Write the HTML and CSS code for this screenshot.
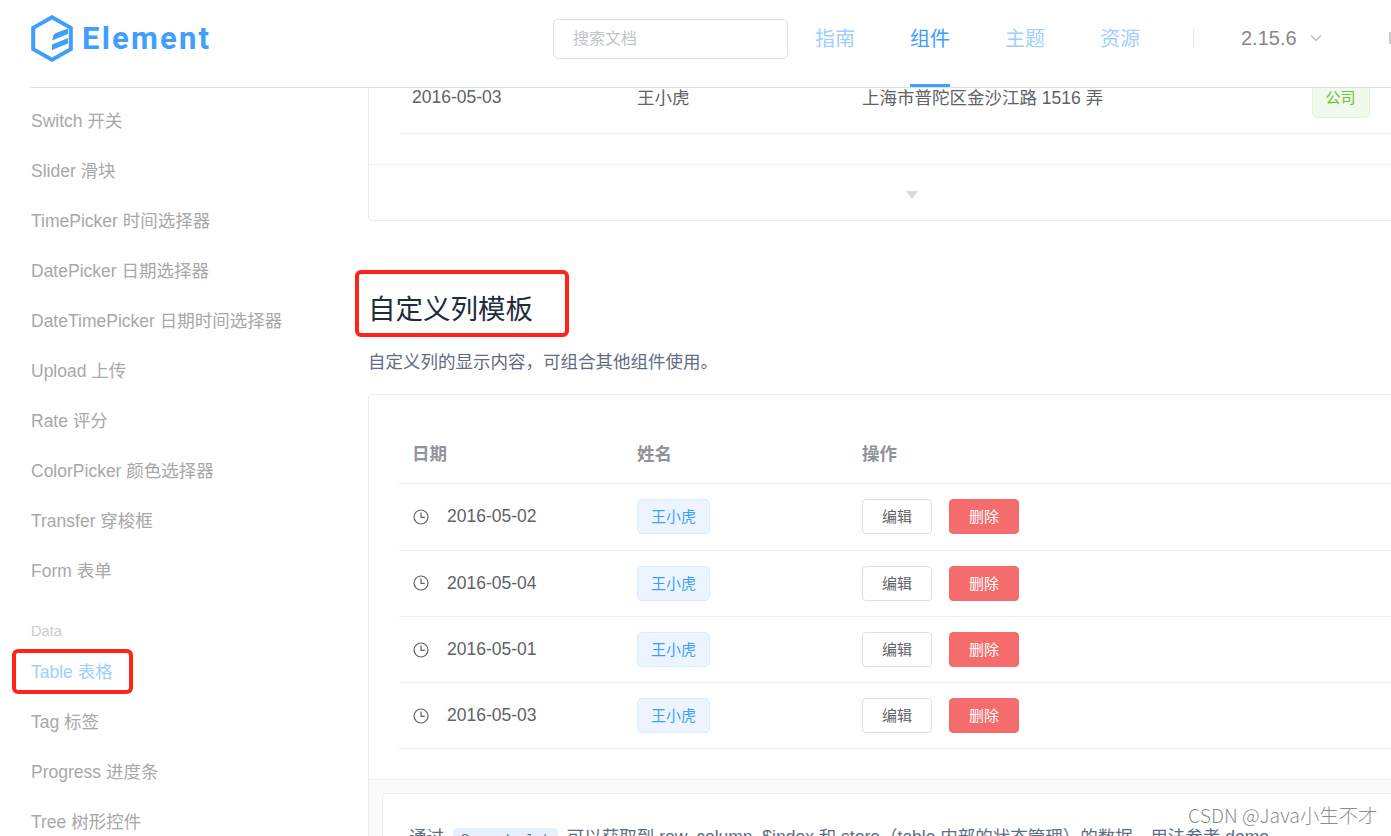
FILE: index.html
```html
<!DOCTYPE html>
<html lang="zh-CN">
<head>
  <meta charset="UTF-8" />
  <title>Element</title>
  <link rel="stylesheet" href="styles.css">
</head>
<body>

  <header class="topbar">
    <a class="logo">
      <svg class="logo-mark" viewBox="0 0 42 47" width="42" height="47">
        <path d="M21 2.2 L39.8 12.8 V34.2 L21 44.8 L2.2 34.2 V12.8 Z" fill="none" stroke="#409eff" stroke-width="4"/>
        <path d="M22 22.5 C22 20 23 19 25 18 L37 13.5 V19 L27 23 L21 25.5 Z" fill="#409eff"/>
        <path d="M21 29.5 L37 23 V28.5 L21 35 Z" fill="#409eff"/>
      </svg>
      <span class="logo-text">Element</span>
    </a>
    <div class="search">搜索文档</div>
    <nav class="nav">
      <a>指南</a>
      <a class="active">组件</a>
      <a>主题</a>
      <a>资源</a>
    </nav>
    <span class="divider"></span>
    <div class="version">2.15.6
      <svg viewBox="0 0 12 8" width="12" height="8"><path d="M1 1.5 L6 6.5 L11 1.5" fill="none" stroke="#b4b4b4" stroke-width="1.2"/></svg>
    </div>
    <span class="lang"></span>
  </header>

  <div class="page">
    <aside class="sidebar">
      <ul class="menu">
        <li>Switch 开关</li>
        <li>Slider 滑块</li>
        <li>TimePicker 时间选择器</li>
        <li>DatePicker 日期选择器</li>
        <li>DateTimePicker 日期时间选择器</li>
        <li>Upload 上传</li>
        <li>Rate 评分</li>
        <li>ColorPicker 颜色选择器</li>
        <li>Transfer 穿梭框</li>
        <li>Form 表单</li>
      </ul>
      <div class="menu-group">Data</div>
      <ul class="menu">
        <li class="current">Table 表格</li>
        <li>Tag 标签</li>
        <li>Progress 进度条</li>
        <li>Tree 树形控件</li>
      </ul>
    </aside>

    <main class="content">
      <section class="demo demo-top">
        <div class="row row-top">
          <span class="cell col-date">2016-05-03</span>
          <span class="cell col-name">王小虎</span>
          <span class="cell col-addr">上海市普陀区金沙江路 1516 弄</span>
          <span class="tag tag-green">公司</span>
        </div>
        <div class="demo-control"><span class="caret"></span></div>
      </section>

      <h3 class="title">自定义列模板</h3>
      <p class="desc">自定义列的显示内容&#xFF0C;可组合其他组件使用。</p>

      <section class="demo">
        <div class="table">
          <div class="row head">
            <span class="cell col-date">日期</span>
            <span class="cell col-name">姓名</span>
            <span class="cell">操作</span>
          </div>
          <div class="row">
            <span class="cell col-date"><svg class="clock" viewBox="0 0 16 16" width="16" height="16"><circle cx="8" cy="8" r="7" fill="none" stroke="#606266" stroke-width="1.2"/><path d="M8 3.6 V8.4 H11.8" fill="none" stroke="#606266" stroke-width="1.2"/></svg>2016-05-02</span>
            <span class="cell col-name"><span class="tag">王小虎</span></span>
            <span class="cell actions"><a class="btn">编辑</a><a class="btn btn-danger">删除</a></span>
          </div>
          <div class="row">
            <span class="cell col-date"><svg class="clock" viewBox="0 0 16 16" width="16" height="16"><circle cx="8" cy="8" r="7" fill="none" stroke="#606266" stroke-width="1.2"/><path d="M8 3.6 V8.4 H11.8" fill="none" stroke="#606266" stroke-width="1.2"/></svg>2016-05-04</span>
            <span class="cell col-name"><span class="tag">王小虎</span></span>
            <span class="cell actions"><a class="btn">编辑</a><a class="btn btn-danger">删除</a></span>
          </div>
          <div class="row">
            <span class="cell col-date"><svg class="clock" viewBox="0 0 16 16" width="16" height="16"><circle cx="8" cy="8" r="7" fill="none" stroke="#606266" stroke-width="1.2"/><path d="M8 3.6 V8.4 H11.8" fill="none" stroke="#606266" stroke-width="1.2"/></svg>2016-05-01</span>
            <span class="cell col-name"><span class="tag">王小虎</span></span>
            <span class="cell actions"><a class="btn">编辑</a><a class="btn btn-danger">删除</a></span>
          </div>
          <div class="row">
            <span class="cell col-date"><svg class="clock" viewBox="0 0 16 16" width="16" height="16"><circle cx="8" cy="8" r="7" fill="none" stroke="#606266" stroke-width="1.2"/><path d="M8 3.6 V8.4 H11.8" fill="none" stroke="#606266" stroke-width="1.2"/></svg>2016-05-03</span>
            <span class="cell col-name"><span class="tag">王小虎</span></span>
            <span class="cell actions"><a class="btn">编辑</a><a class="btn btn-danger">删除</a></span>
          </div>
        </div>
        <div class="meta">
          <div class="tip">通过 <code>Scoped slot</code> 可以获取到 row, column, $index 和 store&#xFF08;table 内部的状态管理&#xFF09;的数据&#xFF0C;用法参考 demo。</div>
        </div>
      </section>
    </main>
  </div>

  <div class="mark mark-title"></div>
  <div class="mark mark-menu"></div>
  <div class="watermark">CSDN @Java小生不才</div>

</body>
</html>
```

FILE: styles.css
```css
* {
  margin: 0;
  padding: 0;
  box-sizing: border-box;
}
body {
  font-family: "Liberation Sans", "Noto Sans CJK SC", sans-serif;
  color: #606266;
  background: #fff;
  height: 836px;
  overflow: hidden;
}
.topbar {
  position: relative;
  z-index: 2;
  display: flex;
  align-items: center;
  height: 88px;
  margin-left: 31px;
  padding-bottom: 11px;
  background: #fff;
  border-bottom: 1px solid #dcdfe6;
}
.logo {
  display: flex;
  align-items: center;
  width: 522px;
  padding-top: 1px;
}
.logo-mark {
  flex: none;
}
.logo-text {
  margin-left: 9px;
  font-family: "Roboto", sans-serif;
  font-size: 31px;
  font-weight: 700;
  letter-spacing: 2.2px;
  color: #409eff;
}
.search {
  width: 235px;
  height: 40px;
  margin-top: 2px;
  padding-left: 19px;
  font-size: 16px;
  line-height: 38px;
  color: #c0c4cc;
  border: 1px solid #dcdfe6;
  border-radius: 5px;
}
.nav {
  display: flex;
  gap: 55px;
  margin: 0 0 2px 27px;
}
.nav a {
  position: relative;
  font-size: 20px;
  color: #a0cfff;
}
.nav a.active {
  color: #409eff;
}
.nav a.active::after {
  content: "";
  position: absolute;
  left: 0;
  right: 0;
  top: 61px;
  height: 3px;
  background: #409eff;
}
.divider {
  width: 1px;
  height: 20px;
  margin-left: 53px;
  background: #e6e6e6;
}
.version {
  display: flex;
  align-items: center;
  gap: 13px;
  margin-left: 47px;
  font-size: 20px;
  color: #888;
}
.lang {
  width: 2px;
  height: 12px;
  margin-left: 67px;
  background: #ccc;
}
.page {
  display: flex;
}
.sidebar {
  flex: none;
  width: 368px;
  padding: 8px 0 0 31px;
}
.menu {
  list-style: none;
}
.menu li {
  height: 50px;
  line-height: 50px;
  font-size: 17.5px;
  color: #a8a8a8;
}
.menu li.current {
  color: #a0cfff;
}
.menu-group {
  height: 51px;
  padding-top: 25px;
  line-height: 20px;
  font-size: 14.7px;
  color: #ccc;
}
.content {
  flex: none;
  width: 1088px;
}
.demo {
  border: 1px solid #ebebeb;
  border-radius: 4px;
}
.demo-top {
  margin-top: -21px;
}
.row {
  display: flex;
  align-items: center;
  height: 66.3px;
  margin-left: 30px;
  border-bottom: 1px solid #ebeef5;
  font-size: 17.5px;
}
.row-top .cell {
  margin-bottom: 6px;
}
.row-top .col-name,
.row-top .col-addr {
  margin-bottom: 9px;
}
.cell {
  padding-left: 13px;
}
.col-date {
  display: flex;
  align-items: center;
  width: 225px;
}
.col-name {
  width: 225px;
}
.col-addr {
  width: 462.6px;
}
.tag {
  display: inline-block;
  height: 35px;
  padding: 0 13px;
  font-size: 15px;
  line-height: 33px;
  color: #409eff;
  background: #ecf5ff;
  border: 1px solid #d9ecff;
  border-radius: 5px;
}
.tag-green {
  line-height: 28px;
  color: #67c23a;
  background: #f0f9eb;
  border-color: #e1f3d8;
}
.demo-control {
  display: flex;
  justify-content: center;
  align-items: center;
  height: 56px;
  margin-top: 30px;
  border-top: 1px solid #eaeefb;
}
.caret {
  width: 0;
  height: 0;
  margin-top: 4px;
  border-left: 6px solid transparent;
  border-right: 6px solid transparent;
  border-top: 8px solid #d3dce6;
}
.title {
  margin-top: 71px;
  font-size: 27.5px;
  font-weight: normal;
  line-height: 36px;
  color: #1f2d3d;
}
.desc {
  margin-top: 21px;
  font-size: 17.5px;
  line-height: 26px;
  color: #5e6d82;
}
.desc + .demo {
  margin-top: 19px;
}
.table {
  padding: 26px 0 30px;
}
.head {
  height: 63px;
  font-weight: bold;
  color: #909399;
}
.clock {
  margin: 0 18px 0 1px;
  flex: none;
}
.actions {
  display: flex;
  gap: 17px;
}
.btn {
  width: 70px;
  height: 35px;
  font-size: 15px;
  line-height: 33px;
  text-align: center;
  color: #606266;
  background: #fff;
  border: 1px solid #dcdfe6;
  border-radius: 4px;
}
.btn-danger {
  color: #fff;
  background: #f56c6c;
  border-color: #f56c6c;
}
.meta {
  height: 100px;
  padding: 13px 13px;
  background: #fafafa;
  border-top: 1px solid #eaeefb;
}
.tip {
  height: 80px;
  padding: 31px 26px;
  font-size: 17.5px;
  line-height: 24px;
  white-space: nowrap;
  color: #5e6d82;
  background: #fff;
  border: 1px solid #ebebeb;
  border-radius: 5px;
}
.tip code {
  padding: 4px 8px;
  margin: 0 4px;
  font-family: "Liberation Mono", monospace;
  font-size: 13.5px;
  background: #e6effb;
  border-radius: 4px;
}
.mark {
  position: absolute;
  border: 4px solid #ff2319;
  border-radius: 6px;
}
.mark-title {
  left: 355px;
  top: 270px;
  width: 214px;
  height: 67px;
}
.mark-menu {
  left: 12px;
  top: 649px;
  width: 121px;
  height: 45px;
}
.watermark {
  position: absolute;
  left: 1188px;
  top: 803px;
  font-family: "Noto Sans CJK SC", "Open Sans", sans-serif;
  font-size: 19.4px;
  font-weight: 300;
  line-height: 24px;
  color: rgba(120, 120, 120, 0.85);
}
```
